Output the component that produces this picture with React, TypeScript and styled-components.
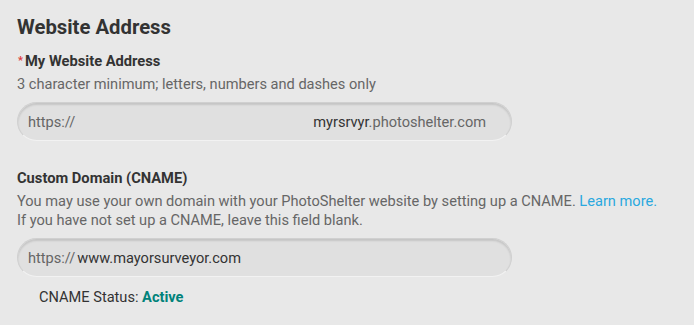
import styled, { createGlobalStyle } from "styled-components";

const Global = createGlobalStyle`
	html, body {
		margin: 0;
		padding: 0;
		background: #e8e8e8;
	}
	body {
		font-family: Roboto, "Liberation Sans", Arial, sans-serif;
		color: #666;
	}
`;

const Page = styled.div`
	padding: 14px 17px 0 17px;
	width: 694px;
	box-sizing: border-box;
`;

const Title = styled.h2`
	margin: 0 0 11px 0;
	font-size: 20.3px;
	line-height: 26px;
	font-weight: 700;
	color: #333;
`;

const Field = styled.div`
	margin-bottom: 27px;
`;

const Label = styled.div`
	font-size: 14.7px;
	line-height: 20px;
	font-weight: 700;
	color: #333;
	margin-bottom: 4px;
	display: flex;
	align-items: center;
`;

const Required = styled.span`
	color: #e0393e;
	font-size: 11px;
	margin-right: 2px;
	margin-left: 1px;
`;

const Help = styled.p`
	margin: 0 0 8px 0;
	font-size: 14.6px;
	line-height: 19px;
	color: #666;
`;

const Link = styled.a`
	color: #2aa8df;
	text-decoration: none;
`;

const Input = styled.div`
	width: 495px;
	height: 39px;
	box-sizing: border-box;
	border-radius: 20px;
	background: #e0e0e0;
	border: 1px solid #d0d0d0;
	border-bottom-color: #f2f2f2;
	box-shadow: inset 0 2px 2px rgba(0, 0, 0, 0.12);
	display: flex;
	align-items: center;
	padding: 0 25px 0 10px;
	font-size: 14.6px;
`;

const Prefix = styled.span`
	color: #666;
	margin-right: 2px;
`;

const Value = styled.span<{ $right?: boolean }>`
	flex: 1;
	text-align: ${(p) => (p.$right ? "right" : "left")};
	color: #333;
`;

const Suffix = styled.span`
	color: #666;
`;

const Status = styled.div`
	margin: 10px 0 0 22px;
	font-size: 14.6px;
	line-height: 20px;
	color: #333;
`;

const Active = styled.span`
	color: #00827a;
	font-weight: 700;
`;

export default function App() {
	return (
		<Page>
			<Global />
			<Title>Website Address</Title>
			<Field>
				<Label>
					<Required>*</Required>My Website Address
				</Label>
				<Help>3 character minimum; letters, numbers and dashes only</Help>
				<Input>
					<Prefix>https://</Prefix>
					<Value $right>
						myrsrvyr<Suffix>.photoshelter.com</Suffix>
					</Value>
				</Input>
			</Field>
			<Field>
				<Label>Custom Domain (CNAME)</Label>
				<Help>
					You may use your own domain with your PhotoShelter website by setting up a CNAME.{" "}
					<Link href="#">Learn more.</Link>
					<br />
					If you have not set up a CNAME, leave this field blank.
				</Help>
				<Input>
					<Prefix>https://</Prefix>
					<Value>www.mayorsurveyor.com</Value>
				</Input>
				<Status>
					CNAME Status: <Active>Active</Active>
				</Status>
			</Field>
		</Page>
	);
}
